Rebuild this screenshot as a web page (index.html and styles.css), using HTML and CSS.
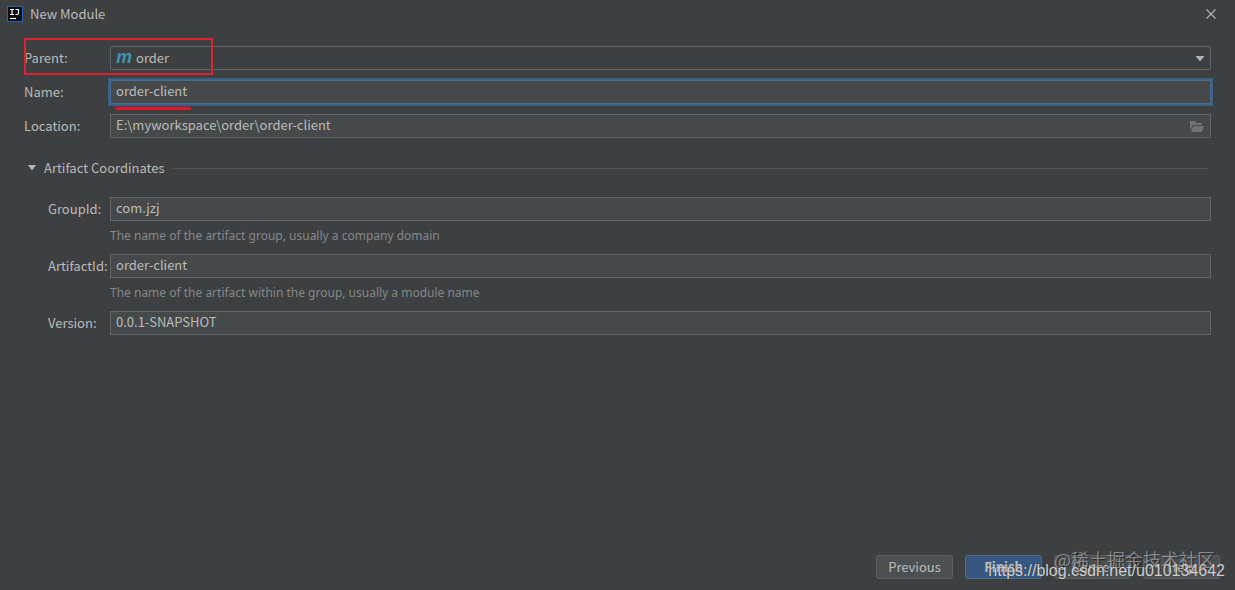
FILE: index.html
```
<!DOCTYPE html>
<html lang="en">
<head>
    <meta charset="UTF-8">
    <meta name="viewport" content="width=device-width, initial-scale=1.0">
    <title>New Module</title>
    <link rel="stylesheet" href="styles.css">
</head>
<body>
<header class="titlebar">
    <svg class="app-icon" width="16" height="16" viewBox="0 0 16 16" aria-hidden="true">
        <rect width="16" height="16" fill="#2a63b5"/>
        <rect x="1" y="1" width="14" height="14" fill="#0b0d12"/>
        <path d="M3 3.5h4M5 3.5v5M3 8.5h4M8.5 3.5H12M11.5 3.5v3.5q0 1.5-1.5 1.5H8.5" fill="none" stroke="#fff" stroke-width="1.2"/>
        <path d="M3 12.5h6" stroke="#fff" stroke-width="1.2"/>
    </svg>
    <h1 class="title">New Module</h1>
    <button class="close" type="button" aria-label="Close">
        <svg width="10" height="10" viewBox="0 0 10 10"><path d="M.5.5l9 9M9.5.5l-9 9" stroke="#b4b6b7" stroke-width="1.1"/></svg>
    </button>
</header>

<form class="dialog">
    <div class="row">
        <label for="parent">Parent:</label>
        <div class="field">
            <select id="parent" class="control">
                <option>order</option>
            </select>
            <span class="maven" aria-hidden="true">m</span>
            <svg class="arrow" width="10" height="6" viewBox="0 0 10 6" aria-hidden="true"><path d="M.5 0h9L5 5.5z" fill="#b0b2b3"/></svg>
        </div>
        <div class="mark-box"></div>
    </div>
    <div class="row">
        <label for="name">Name:</label>
        <div class="field">
            <input id="name" class="control focused" type="text" value="order-client">
            <div class="mark-line"></div>
        </div>
    </div>
    <div class="row">
        <label for="location">Location:</label>
        <div class="field">
            <input id="location" class="control" type="text" value="E:\myworkspace\order\order-client">
            <button class="browse" type="button" aria-label="Browse">
                <svg width="14" height="11" viewBox="0 0 14 11"><path d="M0 9V0h5l1.5 2H12v2H2.8z" fill="#6f7374"/><path d="M3.3 5H14l-2.3 6H.7z" fill="#6f7374"/></svg>
            </button>
        </div>
    </div>

    <details class="section" open>
        <summary>
            <svg width="8" height="6" viewBox="0 0 8 6" aria-hidden="true"><path d="M0 0h8L4 5.5z" fill="#b4b6b7"/></svg>
            <span>Artifact Coordinates</span>
        </summary>
        <div class="coords">
            <div class="row">
                <label for="group">GroupId:</label>
                <div class="field"><input id="group" class="control" type="text" value="com.jzj"></div>
            </div>
            <p class="hint">The name of the artifact group, usually a company domain</p>
            <div class="row">
                <label for="artifact">ArtifactId:</label>
                <div class="field"><input id="artifact" class="control" type="text" value="order-client"></div>
            </div>
            <p class="hint">The name of the artifact within the group, usually a module name</p>
            <div class="row">
                <label for="version">Version:</label>
                <div class="field"><input id="version" class="control" type="text" value="0.0.1-SNAPSHOT"></div>
            </div>
        </div>
    </details>

    <footer class="buttons">
        <button class="btn" type="button">Previous</button>
        <button class="btn primary" type="submit">Finish</button>
        <button class="btn" type="button">Cancel</button>
        <button class="btn" type="button">Help</button>
    </footer>
</form>

<div class="watermark community">@稀土掘金技术社区</div>
<div class="watermark blog">https://blog.csdn.net/u010134642</div>
</body>
</html>
```

FILE: styles.css
```
* {
    box-sizing: border-box;
}
body {
    position: relative;
    display: flex;
    flex-direction: column;
    min-height: 100vh;
    margin: 0;
    background: #3d3f41;
    color: #bbbbbb;
    font: 13px/20px "Noto Sans CJK SC", sans-serif;
}
button, input, select {
    margin: 0;
    color: inherit;
    font: inherit;
}

.titlebar {
    display: flex;
    align-items: center;
    gap: 7px;
    height: 28px;
    padding: 0 19px 0 7px;
}
.title {
    flex: 1;
    margin: 0;
    font-size: 13px;
    font-weight: normal;
}
.close, .browse {
    display: flex;
    padding: 0;
    border: 0;
    background: none;
}

.dialog {
    flex: 1;
    display: flex;
    flex-direction: column;
    gap: 10px;
    padding: 18px 24px 11px;
}
.row {
    position: relative;
    display: flex;
    align-items: center;
}
.row label {
    width: 86px;
}
.field {
    position: relative;
    flex: 1;
}
.control {
    display: block;
    width: 100%;
    height: 24px;
    padding: 0 5px 3px;
    border: 1px solid #616566;
    border-radius: 0;
    outline: 0;
    background: #45494a;
}
select.control {
    padding: 0 25px;
    border-radius: 2px;
    background: #3d3f41;
    appearance: none;
}
.focused {
    border-color: #466d94;
    box-shadow: 0 0 0 2px #3d6185;
}
.maven {
    position: absolute;
    top: 0;
    left: 6px;
    color: #4390ad;
    font: italic bold 18px/21px "Open Sans", sans-serif;
}
.arrow {
    position: absolute;
    top: 10px;
    right: 6px;
}
.browse {
    position: absolute;
    top: 7px;
    right: 7px;
}

/* red pen marks */
.mark-box {
    position: absolute;
    top: -8px;
    left: 0;
    width: 189px;
    height: 37px;
    border: 2px solid #dc2430;
}
.mark-line {
    position: absolute;
    top: 27px;
    left: 5px;
    width: 76px;
    height: 3px;
    border-radius: 2px;
    background: #e5142b;
}

.section {
    margin-top: 10px;
}
summary {
    display: flex;
    align-items: center;
    gap: 8px;
    padding: 0 3px 0 4px;
    list-style: none;
}
summary::after {
    content: "";
    flex: 1;
    height: 1px;
    background: #515456;
}
.coords {
    padding-top: 19px;
}
.coords .row {
    padding-left: 24px;
}
.coords label {
    width: 62px;
}
.hint {
    margin: 5px 0 8px 86px;
    color: #85888a;
    font: 12px/20px "Noto Sans", sans-serif;
}

.buttons {
    display: flex;
    justify-content: flex-end;
    gap: 12px;
    margin-top: auto;
    margin-right: -9px;
}
.btn {
    width: 77px;
    height: 24px;
    padding: 0;
    border: 1px solid #5e6060;
    border-radius: 3px;
    background: #4c5052;
}
.primary {
    border-color: #4c708c;
    background: #365880;
    font-weight: bold;
}

.watermark {
    position: absolute;
    white-space: nowrap;
    pointer-events: none;
}
.community {
    right: 20px;
    bottom: 19px;
    color: rgba(190, 190, 190, .6);
    font: 18px/24px "Noto Sans CJK SC", sans-serif;
    text-shadow: 1px 1px 1px rgba(0, 0, 0, .5);
}
.blog {
    right: 10px;
    bottom: 9px;
    color: rgba(235, 235, 235, .85);
    font: 16px/20px "Liberation Sans", sans-serif;
    text-shadow: 0 0 1px #333333;
}
```
